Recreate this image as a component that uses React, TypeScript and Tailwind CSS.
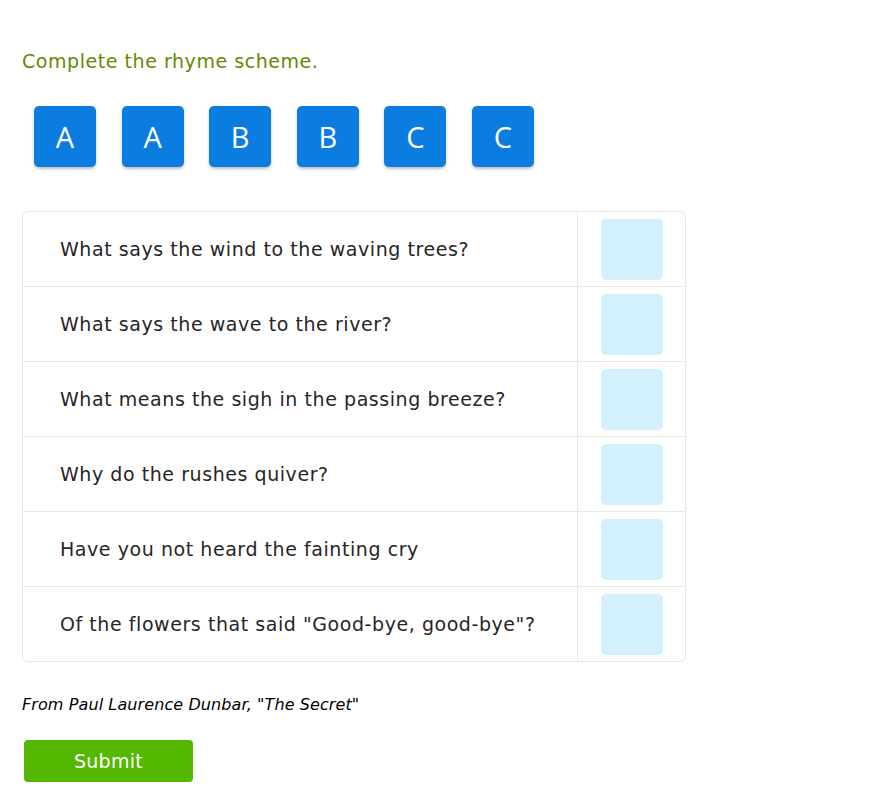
const letters = ['A', 'A', 'B', 'B', 'C', 'C']

const lines = [
  'What says the wind to the waving trees?',
  'What says the wave to the river?',
  'What means the sigh in the passing breeze?',
  'Why do the rushes quiver?',
  'Have you not heard the fainting cry',
  'Of the flowers that said "Good-bye, good-bye"?',
]

export default function App() {
  return (
    <div className="min-h-screen bg-white pl-[22px] pt-[48px] font-['DejaVu_Sans',Verdana,sans-serif]">
      <h1 className="text-[19px] leading-[26px] tracking-[0.55px] text-[#658a00]">Complete the rhyme scheme.</h1>

      <div className="mt-[32px] flex gap-[25.6px] pl-[12px]">
        {letters.map((l, i) => (
          <div
            key={i}
            className="flex h-[61px] w-[62px] items-center justify-center rounded-[5px] bg-[#0b7de0] text-[29px] text-white shadow-[0_2px_3px_rgba(0,0,0,0.25)] font-['Open_Sans',Roboto,sans-serif]"
          >
            {l}
          </div>
        ))}
      </div>

      <div className="mt-[44px] w-[664px] overflow-hidden rounded-[6px] border border-[#e8e8e8]">
        {lines.map((t, i) => (
          <div key={i} className={`flex ${i > 0 ? 'h-[75px] border-t border-[#e8e8e8]' : 'h-[74px]'}`}>
            <div className="flex flex-1 items-center pl-[37px] text-[19px] tracking-[0.56px] text-[#262626]">{t}</div>
            <div className="flex w-[108px] items-center justify-center border-l border-[#e8e8e8]">
              <div className="h-[61px] w-[62px] rounded-[5px] bg-[#d3f1fd]" />
            </div>
          </div>
        ))}
      </div>

      <p className="mt-[31px] text-[16px] italic tracking-[0.1px] text-black">From Paul Laurence Dunbar, "The Secret"</p>

      <button className="mt-[23px] ml-[2px] h-[42px] w-[169px] rounded-[4px] bg-[#55b800] text-[19px] tracking-[0.3px] text-white">
        Submit
      </button>
    </div>
  )
}
